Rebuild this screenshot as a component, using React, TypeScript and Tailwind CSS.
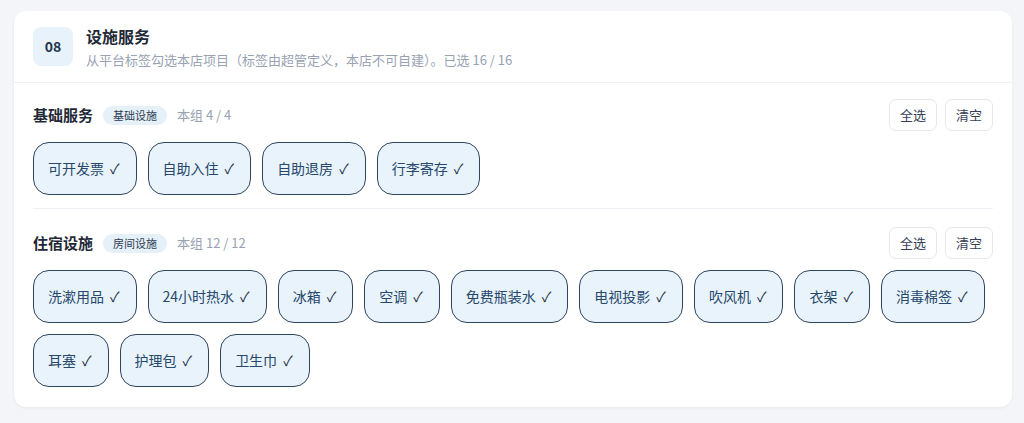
// FacilityServices — section 08 of the store setup form: pick platform tags per group.

const FONT = { fontFamily: '"Noto Sans CJK SC", "Noto Sans", sans-serif' };

interface Group {
    title: string;
    tag: string;
    items: string[];
}

const GROUPS: Group[] = [
    { title: "基础服务", tag: "基础设施", items: ["可开发票", "自助入住", "自助退房", "行李寄存"] },
    {
        title: "住宿设施",
        tag: "房间设施",
        items: ["洗漱用品", "24小时热水", "冰箱", "空调", "免费瓶装水", "电视投影", "吹风机", "衣架", "消毒棉签", "耳塞", "护理包", "卫生巾"],
    },
];

function Chip({ label }: { label: string }) {
    return (
        <button className="h-[53px] pl-[14px] pr-[16px] rounded-[16px] border border-[#2f4560] bg-[#e8f3fb] text-[14px] text-[#27476b] flex items-center gap-[6px]">
            <span>{label}</span>
            <span className="text-[#1f2f45]">✓</span>
        </button>
    );
}

function GroupBlock({ group, first, last }: { group: Group; first: boolean; last: boolean }) {
    const n = group.items.length;
    return (
        <div className={[first ? "pt-[16px]" : "pt-[18px]", "pb-[13px]", last ? "" : "border-b border-[#eef1f5]"].join(" ")}>
            <div className="flex items-center justify-between h-[32px]">
                <div className="flex items-center">
                    <span className="text-[15px] font-bold text-[#1f2937]">{group.title}</span>
                    <span className="ml-[10px] px-[10px] h-[19px] leading-[19px] rounded-full bg-[#e6f0f8] text-[11px] text-[#2c3e55]">
                        {group.tag}
                    </span>
                    <span className="ml-[10px] text-[13px] text-[#98a2b3]">本组 {n} / {n}</span>
                </div>
                <div className="flex gap-[8px]">
                    <button className="h-[32px] w-[48px] rounded-[7px] border border-[#e4e7ec] bg-white text-[13px] text-[#344054]">全选</button>
                    <button className="h-[32px] w-[48px] rounded-[7px] border border-[#e4e7ec] bg-white text-[13px] text-[#344054]">清空</button>
                </div>
            </div>
            <div className="flex flex-wrap gap-x-[11px] gap-y-[11px] mt-[11px]">
                {group.items.map((it) => (
                    <Chip key={it} label={it} />
                ))}
            </div>
        </div>
    );
}

export default function App() {
    return (
        <div style={FONT} className="w-[1024px] h-[423px] bg-[#f3f5f8] pt-[11px] px-[14px]">
            <div className="w-[998px] h-[396px] bg-white rounded-[12px] shadow-[0_1px_3px_rgba(16,24,40,0.06)]">
                <div className="flex items-center px-[19px] h-[72px] border-b border-[#eef1f5]">
                    <div className="w-[40px] h-[39px] rounded-[8px] bg-[#e8f2fb] flex items-center justify-center text-[14px] font-bold text-[#1f3550]">
                        08
                    </div>
                    <div className="ml-[13px] flex flex-col">
                        <span className="text-[16px] font-bold text-[#1f2937] leading-[22px]">设施服务</span>
                        <span className="mt-[4px] text-[13px] text-[#98a2b3] leading-[18px]">
                            从平台标签勾选本店项目（标签由超管定义，本店不可自建）。已选 16 / 16
                        </span>
                    </div>
                </div>
                <div className="px-[19px]">
                    {GROUPS.map((g, i) => (
                        <GroupBlock key={g.title} group={g} first={i === 0} last={i === GROUPS.length - 1} />
                    ))}
                </div>
            </div>
        </div>
    );
}
